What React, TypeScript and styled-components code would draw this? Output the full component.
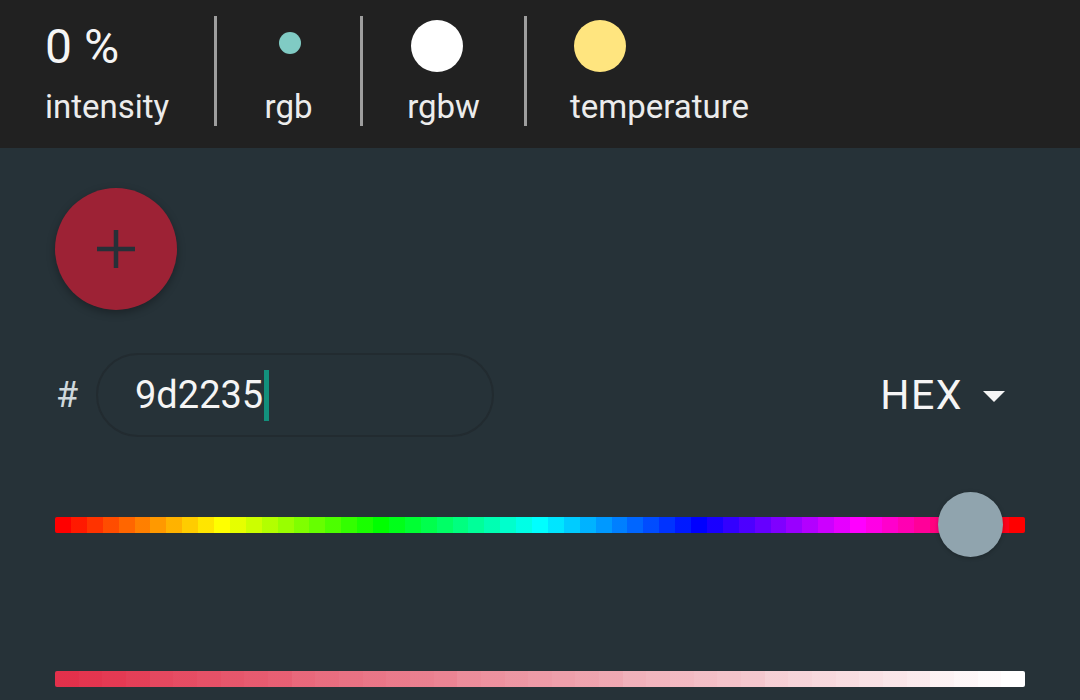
import React from 'react';
import styled, { createGlobalStyle } from 'styled-components';

const GlobalStyle = createGlobalStyle`
   html, body {
      margin: 0;
      padding: 0;
      background: #263238;
      font-family: Roboto, "Noto Sans", "Liberation Sans", sans-serif;
      color: #f5f5f5;
   }
`;

const Page = styled.div`
   width: 1080px;
   height: 700px;
   overflow: hidden;
   background: #263238;
`;

const ModeBar = styled.div`
   display: flex;
   align-items: stretch;
   height: 148px;
   padding-left: 45px;
   box-sizing: border-box;
   background: #212121;
`;

const Mode = styled.div<{ $align?: 'left' | 'center'; $width?: number }>`
   display: flex;
   flex-direction: column;
   align-items: ${p => (p.$align === 'left' ? 'flex-start' : 'center')};
   width: ${p => (p.$width ? `${p.$width}px` : 'auto')};
   padding-left: ${p => (p.$width ? 0 : 43)}px;
`;

const ModeTop = styled.div`
   height: 92px;
   display: flex;
   align-items: center;
`;

const Percent = styled.span`
   font-size: 48px;
   line-height: 1;
   margin-top: 1px;
   color: #f5f5f5;
`;

const Dot = styled.span<{ $color: string; $size: number; $shift?: number }>`
   display: block;
   width: ${p => p.$size}px;
   height: ${p => p.$size}px;
   border-radius: 50%;
   background: ${p => p.$color};
   margin-top: ${p => (p.$size > 30 ? 0 : -6)}px;
   transform: translateX(${p => p.$shift ?? 0}px);
`;

const ModeLabel = styled.span`
   font-size: 33px;
   line-height: 1;
   margin-top: -2px;
   color: #ececec;
`;

const Divider = styled.div`
   width: 3px;
   margin: 16px 0 22px;
   background: #9e9e9e;
`;

const Content = styled.div`
   padding: 40px 55px 0;
`;

const Fab = styled.button`
   width: 122px;
   height: 122px;
   border-radius: 50%;
   border: none;
   padding: 0;
   background: #9d2235;
   display: flex;
   align-items: center;
   justify-content: center;
   box-shadow: 0 3px 8px rgba(0, 0, 0, 0.3);
`;

const InputRow = styled.div`
   display: flex;
   align-items: center;
   margin-top: 43px;
   height: 84px;
`;

const Hash = styled.span`
   font-size: 36px;
   color: #cfd8dc;
   width: 40px;
   padding-left: 1px;
`;

const HexField = styled.div`
   width: 398px;
   height: 84px;
   box-sizing: border-box;
   border: 2px solid #222b30;
   border-radius: 42px;
   display: flex;
   align-items: center;
   padding-left: 37px;
   font-size: 38px;
   color: #f5f5f5;
`;

const Caret = styled.span`
   display: inline-block;
   width: 5px;
   height: 51px;
   background: #12907c;
   margin-left: 1px;
`;

const FormatSelect = styled.div`
   margin-left: auto;
   margin-right: 20px;
   display: flex;
   align-items: center;
   gap: 20px;
   font-size: 41px;
   letter-spacing: 1.5px;
   color: #f5f5f5;
`;

const Arrow = styled.span`
   width: 0;
   height: 0;
   border-left: 11px solid transparent;
   border-right: 11px solid transparent;
   border-top: 11px solid #f5f5f5;
   margin-top: 2px;
`;

const Slider = styled.div<{ $top: number }>`
   position: relative;
   height: 65px;
   margin-top: ${p => p.$top}px;
   display: flex;
   align-items: center;
`;

const Track = styled.div<{ $gradient: string }>`
   width: 100%;
   height: 16px;
   border-radius: 2px;
   background: ${p => p.$gradient};
`;

const Thumb = styled.div`
   position: absolute;
   top: 0;
   width: 65px;
   height: 65px;
   margin-left: -32.5px;
   border-radius: 50%;
   background: #90a4ae;
   box-shadow: 0 1px 4px rgba(0, 0, 0, 0.25);
`;

const stepped = (count: number, color: (t: number) => string) => {
   const stops: string[] = [];
   for (let i = 0; i < count; i++) {
      const a = (i / count) * 100;
      const b = ((i + 1) / count) * 100;
      const c = color(i / (count - 1));
      stops.push(`${c} ${a}%`, `${c} ${b}%`);
   }
   return `linear-gradient(to right, ${stops.join(', ')})`;
};

const hueTrack = stepped(61, t => `hsl(${Math.round(t * 360)}, 100%, 50%)`);
const satTrack = stepped(41, t => `hsl(351, ${Math.round(76 - t * 10)}%, ${Math.round(54 + t * 46)}%)`);

const Plus = () => (
   <svg width="40" height="40" viewBox="0 0 40 40">
      <path d="M20 1v38M1 20h38" stroke="#263038" strokeWidth="4.5" />
   </svg>
);

const App = () => {
   return (
      <Page>
         <GlobalStyle />
         <ModeBar>
            <Mode $align="left" $width={169}>
               <ModeTop>
                  <Percent>0 %</Percent>
               </ModeTop>
               <ModeLabel>intensity</ModeLabel>
            </Mode>
            <Divider />
            <Mode $width={143}>
               <ModeTop>
                  <Dot $color="#80cbc4" $size={22} $shift={1} />
               </ModeTop>
               <ModeLabel>rgb</ModeLabel>
            </Mode>
            <Divider />
            <Mode $width={161}>
               <ModeTop>
                  <Dot $color="#ffffff" $size={52} $shift={-7} />
               </ModeTop>
               <ModeLabel>rgbw</ModeLabel>
            </Mode>
            <Divider />
            <Mode $align="left">
               <ModeTop>
                  <Dot $color="#ffe57f" $size={52} $shift={4} />
               </ModeTop>
               <ModeLabel>temperature</ModeLabel>
            </Mode>
         </ModeBar>
         <Content>
            <Fab>
               <Plus />
            </Fab>
            <InputRow>
               <Hash>#</Hash>
               <HexField>
                  9d2235<Caret />
               </HexField>
               <FormatSelect>
                  HEX
                  <Arrow />
               </FormatSelect>
            </InputRow>
            <Slider $top={55}>
               <Track $gradient={hueTrack} />
               <Thumb style={{ left: `${(915.5 / 970) * 100}%` }} />
            </Slider>
            <Slider $top={89}>
               <Track $gradient={satTrack} />
            </Slider>
         </Content>
      </Page>
   );
};

export default App;
